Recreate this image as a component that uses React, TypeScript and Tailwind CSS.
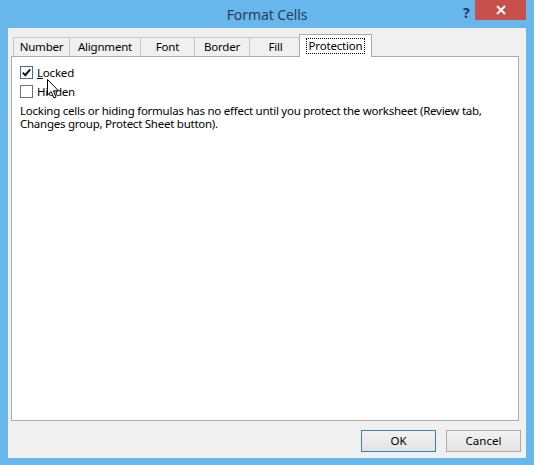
import React from "react"

const font = { fontFamily: '"Noto Sans", "Open Sans", sans-serif' }

function Tab({ label, className }: { label: string; className: string }) {
  return (
    <div
      className={`flex h-[19px] items-center justify-center border border-b-0 border-r-0 border-[#c9c9c9] bg-[#f0f0f0] text-[11.5px] tracking-[-0.2px] text-black ${className}`}
    >
      {label}
    </div>
  )
}

function Checkbox({ checked, label, accent }: { checked?: boolean; label: React.ReactNode; accent?: boolean }) {
  return (
    <div className="flex h-[13px] items-center gap-[4px]">
      <div
        className={`flex size-[13px] items-center justify-center border bg-white ${accent ? "border-[#3c6e9e]" : "border-[#707070]"}`}
      >
        {checked && (
          <svg width="11" height="11" viewBox="0 0 11 11">
            <path d="M1.8 5.6 L4.3 8.2 L9.2 2.3" fill="none" stroke="#111" strokeWidth="2" />
          </svg>
        )}
      </div>
      <span className="text-[11.5px] leading-[13px] tracking-[-0.2px] text-black">{label}</span>
    </div>
  )
}

function DialogButton({ children, primary }: { children: React.ReactNode; primary?: boolean }) {
  return (
    <button
      className={`h-[22px] w-[75px] border bg-gradient-to-b from-[#f2f2f2] to-[#e3e3e3] text-[11.5px] text-black ${primary ? "border-[#3c7fb1]" : "border-[#acacac]"}`}
    >
      {children}
    </button>
  )
}

export default function App() {
  return (
    <div className="relative flex h-[465px] w-[534px] flex-col bg-[#68b7ec]" style={font}>
      {/* title bar */}
      <div className="relative flex h-[28px] items-center justify-center">
        <span className="text-[14px] tracking-[-0.1px] text-[#27405a]">Format Cells</span>
        <span className="absolute left-[463px] top-[2px] text-[14px] font-bold text-[#1d3a5c]">?</span>
        <div className="absolute right-[8px] top-0 flex h-[20px] w-[51px] items-center justify-center bg-[#c7504d]">
          <svg width="10" height="10" viewBox="0 0 10 10">
            <path d="M1 1 L9 9 M9 1 L1 9" stroke="white" strokeWidth="2" />
          </svg>
        </div>
      </div>

      {/* client area */}
      <div className="mx-[8px] mb-[7px] flex flex-1 flex-col bg-[#f0f0f0] pt-[6px]">
        <div className="flex h-[22px] items-end pl-[5px]">
          <Tab label="Number" className="w-[56px]" />
          <Tab label="Alignment" className="w-[71px]" />
          <Tab label="Font" className="w-[54px]" />
          <Tab label="Border" className="w-[55px]" />
          <Tab label="Fill" className="w-[52px] border-r" />
          <div className="relative z-10 -mb-px -ml-[2px] flex h-[23px] w-[73px] items-center justify-center border border-b-0 border-[#acacac] bg-white">
            <span className="border border-dotted border-black px-[2px] text-[11.5px] leading-[14px] tracking-[-0.2px] text-black">
              Protection
            </span>
          </div>
        </div>

        <div className="ml-[3px] mr-[7px] flex flex-1 flex-col border border-[#acacac] bg-white pl-[8px] pt-[9px]">
          <div className="flex flex-col gap-[6px]">
            <Checkbox
              checked
              accent
              label={
                <>
                  <span className="underline">L</span>ocked
                </>
              }
            />
            <Checkbox label="Hidden" />
          </div>
          <p className="mt-[6px] whitespace-nowrap text-[11.5px] leading-[13px] tracking-[-0.25px] text-black">
            Locking cells or hiding formulas has no effect until you protect the worksheet (Review tab,
            <br />
            Changes group, Protect Sheet button).
          </p>
        </div>

        <div className="flex justify-end gap-[10px] pb-[6px] pr-[5px] pt-[9px]">
          <DialogButton primary>OK</DialogButton>
          <DialogButton>Cancel</DialogButton>
        </div>
      </div>

      {/* mouse pointer */}
      <svg className="absolute left-[47px] top-[79px]" width="13" height="21" viewBox="0 0 13 21">
        <path d="M0.5 0.5 L0.5 16 L4.2 12.6 L6.8 18.8 L9 17.9 L6.5 11.8 L11.5 11.8 Z" fill="white" stroke="black" strokeWidth="1" />
      </svg>
    </div>
  )
}
